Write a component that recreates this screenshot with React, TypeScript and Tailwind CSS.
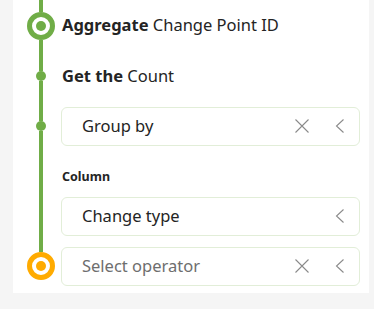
import { ReactNode } from 'react';

const green = 'bg-[#70ad47]';

function Rail({ node, top = true, bottom = true }: { node?: ReactNode; top?: boolean; bottom?: boolean }) {
  return (
    <div className="w-[48px] shrink-0 pl-[14px] flex">
      <div className="w-[28px] flex flex-col items-center">
        <div className={`w-[4px] flex-1 ${top ? green : ''}`} />
        {node}
        <div className={`w-[4px] flex-1 ${bottom ? green : ''}`} />
      </div>
    </div>
  );
}

const RingNode = ({ color }: { color: string }) => (
  <div className={`w-[28px] h-[28px] rounded-full border-[5px] ${color} bg-white flex items-center justify-center shrink-0`}>
    <div className={`w-[10px] h-[10px] rounded-full ${color === 'border-[#70ad47]' ? 'bg-[#70ad47]' : 'bg-[#ffab00]'}`} />
  </div>
);

const Dot = () => <div className="w-[10px] h-[10px] rounded-full bg-[#70ad47] shrink-0" />;

function XIcon() {
  return (
    <svg width="16" height="16" viewBox="0 0 16 16" className="shrink-0">
      <path d="M1.5 1.5 L14.5 14.5 M14.5 1.5 L1.5 14.5" stroke="#8a8a8a" strokeWidth="1.1" fill="none" />
    </svg>
  );
}

function Chevron() {
  return (
    <svg width="10" height="16" viewBox="0 0 10 16" className="shrink-0">
      <path d="M8.5 1.5 L1.5 8 L8.5 14.5" stroke="#8a8a8a" strokeWidth="1.1" fill="none" />
    </svg>
  );
}

function Field({ label, placeholder, clear }: { label: string; placeholder?: boolean; clear?: boolean }) {
  return (
    <div className="w-[299px] h-[39px] rounded-[6px] border border-[#e2eed8] bg-white flex items-center pl-[20px] pr-[14px]">
      <span className={`flex-1 text-[16.5px] ${placeholder ? 'text-[#6e6e6e]' : 'text-[#242424]'}`}>{label}</span>
      {clear && (
        <div className="mr-[25px] flex items-center">
          <XIcon />
        </div>
      )}
      <Chevron />
    </div>
  );
}

export default function App() {
  return (
    <div className="w-[374px] h-[309px] bg-[#f5f5f5] pl-[13px] font-['Noto_Sans',sans-serif] text-[#242424]">
      <div className="w-[356px] bg-white pb-[2px]">
        <div className="flex h-[51px]">
          <Rail node={<RingNode color="border-[#70ad47]" />} />
          <div className="flex items-center text-[16.5px] pl-[1px]">
            <span className="font-bold">Aggregate</span>&nbsp;Change Point ID
          </div>
        </div>
        <div className="flex h-[50px]">
          <Rail node={<Dot />} />
          <div className="flex items-center text-[16.5px] pl-[1px]">
            <span className="font-bold">Get the</span>&nbsp;Count
          </div>
        </div>
        <div className="flex h-[50px]">
          <Rail node={<Dot />} />
          <div className="flex items-center">
            <Field label="Group by" clear />
          </div>
        </div>
        <div className="flex h-[40px]">
          <Rail />
          <div className="pt-[18px] pl-[1px] text-[12.5px] leading-[16px] font-bold">Column</div>
        </div>
        <div className="flex h-[50px]">
          <Rail />
          <div className="flex items-center">
            <Field label="Change type" />
          </div>
        </div>
        <div className="flex h-[50px]">
          <Rail node={<RingNode color="border-[#ffab00]" />} bottom={false} />
          <div className="flex items-center">
            <Field label="Select operator" placeholder clear />
          </div>
        </div>
      </div>
    </div>
  );
}
